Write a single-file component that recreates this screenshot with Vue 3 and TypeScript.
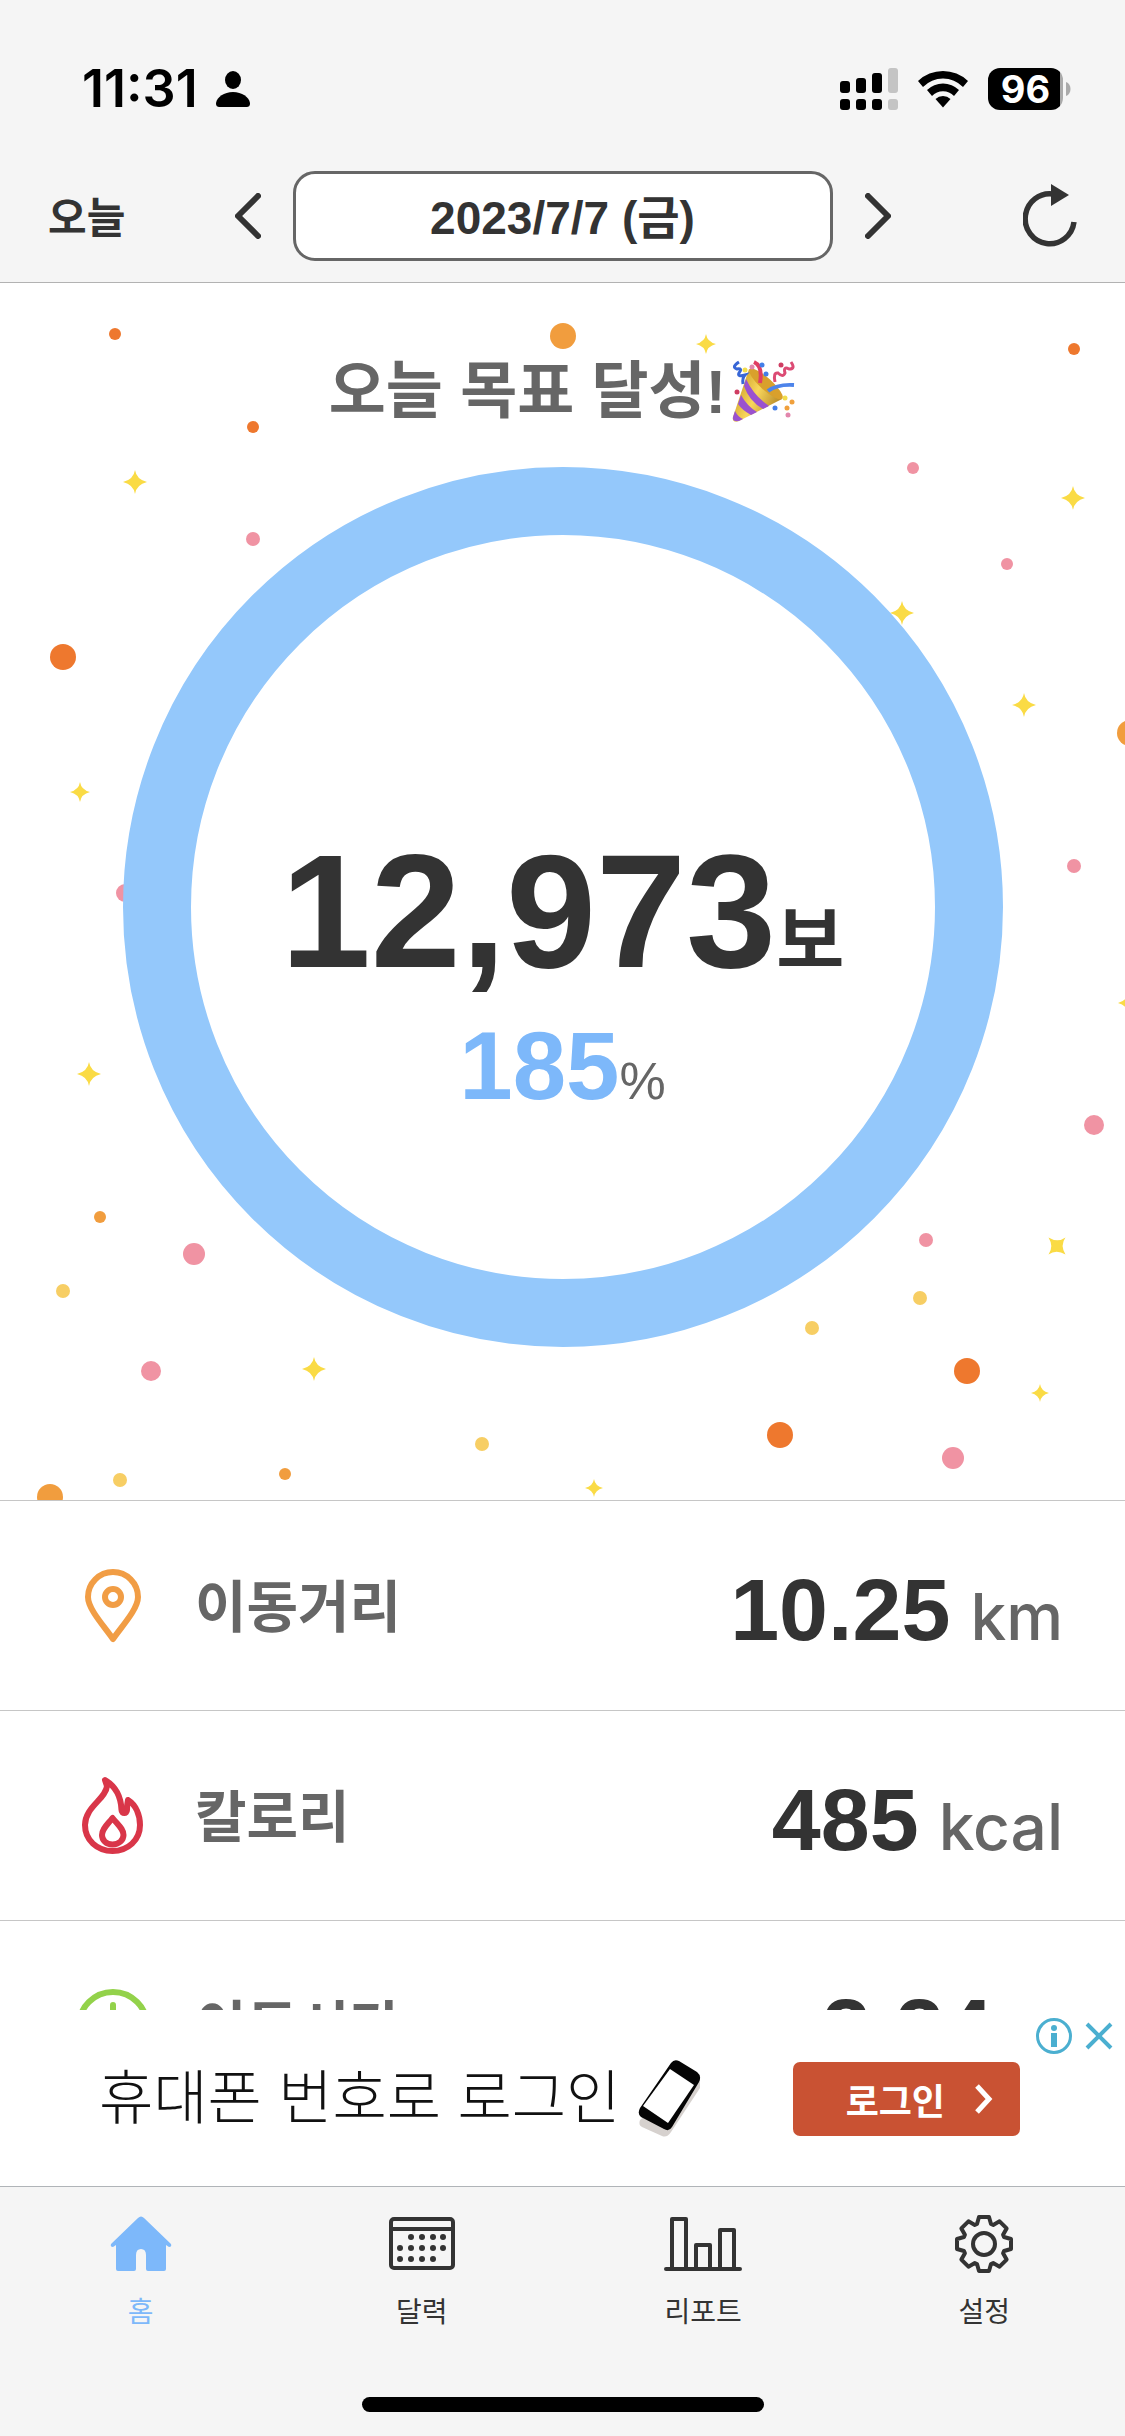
<script setup lang="ts">
type Dot = [x: number, y: number, r: number, tone: string]
type Star = [x: number, y: number, r: number, turn: number]

const dots: Dot[] = [
  [115, 51, 6, 'deep'], [253, 144, 6, 'deep'], [63, 374, 13, 'deep'], [1074, 66, 6, 'deep'],
  [967, 1088, 13, 'deep'], [780, 1152, 13, 'deep'],
  [563, 53, 13, 'amber'], [1130, 450, 13, 'amber'], [100, 934, 6, 'amber'], [285, 1191, 6, 'amber'], [50, 1214, 13, 'amber'],
  [253, 256, 7, 'pink'], [913, 185, 6, 'pink'], [1007, 281, 6, 'pink'], [1074, 583, 7, 'pink'], [125, 610, 9, 'pink'],
  [194, 971, 11, 'pink'], [151, 1088, 10, 'pink'], [1094, 842, 10, 'pink'], [926, 957, 7, 'pink'], [953, 1175, 11, 'pink'],
  [63, 1008, 7, 'gold'], [482, 1161, 7, 'gold'], [120, 1197, 7, 'gold'], [920, 1015, 7, 'gold'], [812, 1045, 7, 'gold'],
]

const stars: Star[] = [
  [135, 199, 12, 0], [80, 509, 10, 0], [706, 61, 10, 0], [1073, 215, 12, 0], [902, 330, 12, 0], [1024, 422, 12, 0],
  [89, 791, 12, 0], [314, 1086, 12, 0], [1128, 720, 10, 0], [1057, 963, 12, 45], [1040, 1110, 9, 0], [594, 1205, 9, 0],
]

const stats = [
  { icon: 'pin', label: '이동거리', value: '10.25', unit: 'km' },
  { icon: 'flame', label: '칼로리', value: '485', unit: 'kcal' },
  { icon: 'clock', label: '이동시간', value: '2.24', unit: 'h' },
]

const tabs = [
  { icon: 'home', label: '홈' },
  { icon: 'calendar', label: '달력' },
  { icon: 'report', label: '리포트' },
  { icon: 'gear', label: '설정' },
]

const calendarDots = [
  [22, 22], [33, 22], [44, 22], [54, 22],
  [11, 33], [22, 33], [33, 33], [44, 33], [54, 33],
  [11, 44], [22, 44], [33, 44], [44, 44],
]

function gearPath(): string {
  const tooth = [[-7, -20], [-5, -27], [5, -27], [7, -20]]
  const points: string[] = []
  for (let k = 0; k < 8; k++) {
    const a = (k * Math.PI) / 4
    for (const [x, y] of tooth) {
      points.push(`${(30 + x * Math.cos(a) - y * Math.sin(a)).toFixed(2)} ${(30 + x * Math.sin(a) + y * Math.cos(a)).toFixed(2)}`)
    }
  }
  return `M${points.join('L')}Z`
}
const gear = gearPath()
</script>

<template>
  <div class="screen">
    <header class="top">
      <div class="status">
        <div class="clock-group">
          <span class="clock">11:31</span>
          <svg class="person" viewBox="0 0 34 36" aria-hidden="true">
            <ellipse cx="17" cy="9" rx="8" ry="9" />
            <path d="M4 36C1 36 0 35 0 32C1 26 8 21 17 21S33 26 34 32C34 35 33 36 30 36Z" />
          </svg>
        </div>
        <div class="signals">
          <svg class="cell" viewBox="0 0 58 42" aria-hidden="true">
            <rect x="0" y="13" width="10" height="12" rx="3" /><rect x="0" y="31" width="10" height="11" rx="3" />
            <rect x="16" y="10" width="10" height="15" rx="3" /><rect x="16" y="31" width="10" height="11" rx="3" />
            <rect x="32" y="5" width="10" height="20" rx="3" /><rect x="32" y="31" width="10" height="11" rx="3" />
            <g fill="#c4c4c4"><rect x="48" y="0" width="10" height="25" rx="3" /><rect x="48" y="31" width="10" height="11" rx="3" /></g>
          </svg>
          <svg class="wifi" viewBox="0 0 52 38" aria-hidden="true">
            <path d="M1 11A36 36 0 0 1 51 11L46 17A28 28 0 0 0 6 17Z" />
            <path d="M10 20A23 23 0 0 1 42 20L37 26A15 15 0 0 0 15 26Z" />
            <path d="M18.500 29A11 11 0 0 1 33.500 29L26 37.500Z" />
          </svg>
          <div class="battery">
            <span class="level">96</span>
            <svg class="cap" viewBox="0 0 5 14" aria-hidden="true"><path d="M0 0C6 2 6 12 0 14Z" /></svg>
          </div>
        </div>
      </div>
      <nav class="day-nav" aria-label="날짜">
        <button type="button" class="today">오늘</button>
        <div class="day-picker">
          <button type="button" class="arrow" aria-label="이전 날">
            <svg viewBox="0 0 26 46"><path d="M23 3L3 23L23 43" /></svg>
          </button>
          <button type="button" class="date">2023/7/7 (금)</button>
          <button type="button" class="arrow" aria-label="다음 날">
            <svg viewBox="0 0 26 46"><path d="M3 3L23 23L3 43" /></svg>
          </button>
        </div>
        <button type="button" class="refresh" aria-label="새로고침">
          <svg viewBox="0 0 54 64">
            <path d="M30 10A24.500 25 0 1 0 51 38" fill="none" stroke="currentColor" stroke-width="5.500" />
            <path d="M28 0L46 11L28 22Z" fill="currentColor" />
          </svg>
        </button>
      </nav>
    </header>

    <main class="content">
      <section class="hero">
        <svg class="confetti" viewBox="0 0 1125 1217" preserveAspectRatio="xMidYMid slice" aria-hidden="true">
          <circle v-for="([x, y, r, tone], i) in dots" :key="`d${i}`" :cx="x" :cy="y" :r="r" :class="tone" />
          <path
            v-for="([x, y, r, turn], i) in stars"
            :key="`s${i}`"
            class="star"
            d="M0 -12Q1.500 -2.500 12 0Q1.500 2.500 0 12Q-1.500 2.500 -12 0Q-1.500 -2.500 0 -12Z"
            :transform="`translate(${x} ${y}) rotate(${turn}) scale(${r / 12})`"
          />
        </svg>
        <h1 class="title">
          오늘 목표 달성!<svg class="popper" viewBox="0 0 64 64" aria-hidden="true">
            <defs>
              <linearGradient id="cone" x1="0" y1="0.300" x2="1" y2="0.800">
                <stop offset="0" stop-color="#c99a22" /><stop offset="0.450" stop-color="#f8d65c" /><stop offset="1" stop-color="#a8781c" />
              </linearGradient>
            </defs>
            <path d="M17 9L1 57C0 61 3 63 7 61L50 39C44 24 30 11 17 9Z" fill="url(#cone)" />
            <path d="M14 19Q22 36 37 46L31 49Q17 41 12 26ZM9 35Q15 46 25 52L19 55Q10 50 6 44ZM3 51Q6 57 11 59L7 61Q0 62 1 57Z" fill="#9a52cf" />
            <ellipse cx="34" cy="24" rx="22" ry="6" transform="rotate(42 34 24)" fill="#d9a02c" />
            <path d="M22 2Q31 6 28 23" fill="none" stroke="#e03e63" stroke-width="4" />
            <path d="M36 31Q45 24 62 25" fill="none" stroke="#4d84ea" stroke-width="4" />
            <path d="M7 2Q-1 7 5 9Q11 8 7 13Q5 17 13 15Q10 18 11 24" fill="none" stroke="#3766d6" stroke-width="3" />
            <path d="M59 2Q64 9 57 9Q51 6 53 13Q51 18 46 13Q41 12 43 22" fill="none" stroke="#dc4b74" stroke-width="3" />
            <g fill="#437ee8"><circle cx="30" cy="5" r="2.500" /><circle cx="34" cy="14" r="2.500" /><circle cx="43" cy="48" r="2.500" /></g>
            <g fill="#f2dc4d"><circle cx="13" cy="10" r="2.500" /><circle cx="53" cy="38" r="2.500" /></g>
            <g fill="#f0a03c"><circle cx="60" cy="42" r="2.500" /><circle cx="55" cy="48" r="2.500" /></g>
            <g fill="#e286ac"><circle cx="20" cy="7" r="2.500" /><circle cx="56" cy="55" r="2.500" /></g>
            <g fill="#cf3d62"><circle cx="49" cy="5" r="2.500" /><circle cx="5" cy="32" r="2.500" /></g>
          </svg>
        </h1>
        <div class="ring">
          <svg class="ring-track" viewBox="0 0 880 880" aria-hidden="true">
            <circle cx="440" cy="440" r="406" />
          </svg>
          <div class="ring-text">
            <p class="steps"><strong>12,973</strong><span>보</span></p>
            <p class="percent"><strong>185</strong><span>%</span></p>
          </div>
        </div>
      </section>

      <dl class="stats">
        <div v-for="s in stats" :key="s.label" class="stat">
          <dt>
            <svg v-if="s.icon === 'pin'" class="stat-icon" viewBox="0 0 80 80" stroke="#f19d45" aria-hidden="true">
              <path d="M40 73C31 60 15 43 15 31A25 25 0 0 1 65 31C65 43 49 60 40 73Z" />
              <circle cx="40" cy="31" r="8" />
            </svg>
            <svg v-else-if="s.icon === 'flame'" class="stat-icon" viewBox="0 0 80 80" stroke="#d93649" aria-hidden="true">
              <path d="M32 4C42 10 48 20 48.500 34C48.500 38 54 38 54 34Q54 28 55 24C63 29 67 39 67 49C67 64 55 75 39.500 75S12 64 12 49C12 31 33 23 34 10Z" />
              <path d="M39.500 42C34 49 29 53 29 59C29 64 33 68.500 39.500 68.500S50.500 64 50.500 59C50.500 53 45 49 39.500 42Z" />
            </svg>
            <svg v-else class="stat-icon" viewBox="0 0 80 80" stroke="#93d24a" aria-hidden="true">
              <circle cx="40" cy="40" r="34" />
              <path d="M40 19V41L54 50" />
            </svg>
            <span class="label">{{ s.label }}</span>
          </dt>
          <dd><strong>{{ s.value }}</strong><span class="unit">{{ s.unit }}</span></dd>
        </div>
      </dl>
    </main>

    <aside class="ad" aria-label="광고">
      <p class="ad-text">휴대폰 번호로 로그인</p>
      <svg class="phone" viewBox="0 0 64 78" aria-hidden="true">
        <path d="M2 60Q0 65 4 67L24 76Q29 78 33 72L62 28V20L58 16Z" fill="#d6d1ce" />
        <path d="M33 3Q36 -1 41 1L59 12Q64 16 61 22L34 67Q31 72 26 69L3 57Q-1 54 2 48Z" fill="#050505" />
        <path d="M32 9L56 25L30 63L5 46Z" fill="#fff" />
      </svg>
      <button type="button" class="login">
        로그인
        <svg viewBox="0 0 20 32" aria-hidden="true"><path d="M4 3L16 16L4 29" /></svg>
      </button>
      <div class="ad-controls">
        <button type="button" aria-label="광고 정보">
          <svg class="info" viewBox="0 0 36 36">
            <circle cx="18" cy="18" r="16.500" fill="none" stroke="currentColor" stroke-width="3" />
            <circle cx="18" cy="10" r="3" fill="currentColor" /><path d="M15 15H21V29H15Z" fill="currentColor" />
          </svg>
        </button>
        <button type="button" aria-label="광고 닫기">
          <svg class="close" viewBox="0 0 28 28"><path d="M2 2L26 26M26 2L2 26" stroke="currentColor" stroke-width="4" /></svg>
        </button>
      </div>
    </aside>

    <footer class="bottom">
      <nav class="tabs" aria-label="메뉴">
        <a v-for="(t, i) in tabs" :key="t.label" href="#" class="tab" :class="{ active: i === 0 }">
          <svg v-if="t.icon === 'home'" width="62" height="60" viewBox="0 0 62 60">
            <path d="M28 4Q31 1 34 4L61 30Q62 33 59 33L56 31V55Q56 57 54 57H38Q36 57 36 55V41Q36 35 31 35T26 41V55Q26 57 24 57H8Q6 57 6 55V31L3 33Q0 33 1 30Z" fill="currentColor" />
          </svg>
          <svg v-else-if="t.icon === 'calendar'" width="66" height="60" viewBox="0 0 66 60">
            <g transform="translate(0 3)">
              <rect x="2" y="2" width="62" height="49" rx="3" fill="none" stroke="currentColor" stroke-width="4" />
              <path d="M2 12H64" stroke="currentColor" stroke-width="4" />
              <circle v-for="([x, y], n) in calendarDots" :key="n" :cx="x" :cy="y - 2" r="3" fill="currentColor" />
            </g>
          </svg>
          <svg v-else-if="t.icon === 'report'" width="78" height="60" viewBox="0 0 78 60">
            <path d="M2 55H76M8 55V5H22V55M32 55V31H46V55M56 55V16H70V55" fill="none" stroke="currentColor" stroke-width="4" stroke-linecap="round" stroke-linejoin="round" />
          </svg>
          <svg v-else width="60" height="60" viewBox="0 0 60 60">
            <path :d="gear" fill="none" stroke="currentColor" stroke-width="4" stroke-linejoin="round" />
            <circle cx="30" cy="30" r="11" fill="none" stroke="currentColor" stroke-width="4" />
          </svg>
          <span>{{ t.label }}</span>
        </a>
      </nav>
      <div class="home-bar"></div>
    </footer>
  </div>
</template>

<style>
body {
  margin: 0;
}
</style>

<style scoped>
.screen {
  display: flex;
  flex-direction: column;
  height: 100vh;
  background: #fff;
  color: #333;
  font-family: "Liberation Sans", "Noto Sans CJK KR", sans-serif;
}

button {
  padding: 0;
  border: 0;
  background: none;
  color: inherit;
  font: inherit;
  cursor: pointer;
}

svg {
  display: block;
}

h1,
p,
dl,
dd {
  margin: 0;
}

.top {
  flex: none;
  border-bottom: 1px solid #b2b2b2;
  background: #f5f5f5;
}

.status {
  display: flex;
  align-items: center;
  justify-content: space-between;
  height: 58px;
  padding: 60px 54px 32px 82px;
  color: #000;
  font-family: Inter, sans-serif;
}

.clock-group,
.signals,
.battery {
  display: flex;
  align-items: center;
}

.clock-group {
  gap: 18px;
}

.clock {
  font-size: 52px;
  font-weight: 600;
  line-height: 58px;
}

.person {
  width: 34px;
  height: 36px;
}

.signals {
  gap: 19px;
}

.cell {
  width: 58px;
  height: 42px;
}

.wifi {
  width: 52px;
  height: 38px;
}

.battery {
  gap: 3px;
}

.level {
  width: 75px;
  border-radius: 12px;
  background: linear-gradient(90deg, #000 72px, #aaa 72px);
  color: #fff;
  font-size: 38px;
  font-weight: 700;
  line-height: 42px;
  text-align: center;
}

.cap {
  width: 5px;
  height: 14px;
  fill: #aaa;
}

.day-nav {
  display: grid;
  grid-template-columns: 1fr auto 1fr;
  align-items: center;
  height: 132px;
  padding: 0 48px;
}

.today {
  justify-self: start;
  padding-bottom: 4px;
  font-size: 42px;
  font-weight: 700;
}

.day-picker {
  display: flex;
  align-items: center;
  gap: 32px;
}

.arrow svg {
  width: 26px;
  height: 46px;
  fill: none;
  stroke: currentColor;
  stroke-width: 6;
  stroke-linecap: round;
  stroke-linejoin: round;
}

.date {
  box-sizing: border-box;
  width: 48vw;
  height: 90px;
  padding-bottom: 4px;
  border: 3px solid #666;
  border-radius: 22px;
  background: #fff;
  font-size: 46px;
  font-weight: 700;
}

.refresh {
  justify-self: end;
}

.refresh svg {
  width: 54px;
  height: 64px;
}

.content {
  flex: 1;
  min-height: 0;
  overflow-y: auto;
  scrollbar-width: none;
}

.hero {
  position: relative;
  display: flex;
  flex-direction: column;
  align-items: center;
  gap: 30px;
  padding: 64px 0 153px;
  overflow: hidden;
}

.confetti {
  position: absolute;
  inset: 0;
  width: 100%;
  height: 100%;
}

.deep {
  fill: #ee782e;
}

.amber {
  fill: #f19d3e;
}

.pink {
  fill: #f093a3;
}

.gold {
  fill: #f7ce64;
}

.star {
  fill: #fadb45;
}

.title {
  position: relative;
  display: flex;
  align-items: center;
  gap: 6px;
  color: #666;
  font-size: 62px;
  font-weight: 700;
  line-height: 90px;
}

.popper {
  width: 64px;
  height: 64px;
}

.ring {
  position: relative;
  display: grid;
  width: 80vw;
  max-width: 880px;
}

.ring-track,
.ring-text {
  grid-area: 1 / 1;
}

.ring-track {
  width: 100%;
}

.ring-track circle {
  fill: #fff;
  stroke: #94c8fb;
  stroke-width: 68;
}

.ring-text {
  position: relative;
  display: flex;
  flex-direction: column;
  align-items: center;
  justify-content: center;
  gap: 26px;
  padding-top: 130px;
}

.steps,
.percent {
  display: flex;
  align-items: baseline;
}

.steps strong {
  font-size: 162px;
  line-height: 162px;
}

.steps span {
  font-size: 74px;
  font-weight: 700;
  line-height: 74px;
}

.percent strong {
  color: #7db8fa;
  font-size: 96px;
  line-height: 96px;
}

.percent span {
  color: #666;
  font-size: 52px;
  line-height: 52px;
}

.stat {
  display: flex;
  align-items: center;
  justify-content: space-between;
  height: 209px;
  padding: 0 62px 0 73px;
  border-top: 1px solid #c6c6c6;
}

.stat dt {
  display: flex;
  align-items: center;
  gap: 42px;
}

.stat-icon {
  width: 80px;
  height: 80px;
  fill: none;
  stroke-width: 6;
  stroke-linecap: round;
  stroke-linejoin: round;
}

.label {
  padding-bottom: 6px;
  color: #666;
  font-size: 56px;
  font-weight: 700;
}

.stat dd {
  display: flex;
  align-items: baseline;
  gap: 20px;
  padding-top: 8px;
}

.stat strong {
  font-size: 88px;
  line-height: 100px;
}

.unit {
  min-width: 50px;
  color: #666;
  font-family: Inter, sans-serif;
  font-size: 64px;
  font-weight: 500;
  line-height: 64px;
}

.ad {
  position: relative;
  display: flex;
  flex: none;
  align-items: center;
  height: 174px;
  padding: 2px 105px 0 99px;
  background: #fff;
}

.ad-text {
  color: #111;
  font-size: 59px;
  font-weight: 300;
  line-height: 80px;
}

.phone {
  width: 64px;
  height: 78px;
  margin-left: 18px;
}

.login {
  display: flex;
  align-items: center;
  gap: 28px;
  height: 74px;
  margin-left: auto;
  padding: 0 27px 0 53px;
  border-radius: 7px;
  background: #c95233;
  color: #fff;
  font-size: 36px;
  font-weight: 700;
}

.login svg {
  width: 20px;
  height: 32px;
  fill: none;
  stroke: currentColor;
  stroke-width: 5;
}

.ad-controls {
  position: absolute;
  top: 8px;
  right: 12px;
  display: flex;
  align-items: center;
  gap: 13px;
  color: #4bafd0;
}

.info {
  width: 36px;
  height: 36px;
}

.close {
  width: 28px;
  height: 28px;
}

.bottom {
  flex: none;
  border-top: 1px solid #b0b4b8;
  background: #f5f5f5;
}

.tabs {
  display: grid;
  grid-template-columns: repeat(4, 1fr);
  padding-top: 27px;
}

.tab {
  display: flex;
  flex-direction: column;
  align-items: center;
  gap: 18px;
  color: #333;
  font-size: 28px;
  line-height: 42px;
  text-decoration: none;
}

.tab.active {
  color: #7db8fa;
}

.home-bar {
  width: 402px;
  height: 15px;
  margin: 63px auto 24px;
  border-radius: 8px;
  background: #000;
}
</style>
